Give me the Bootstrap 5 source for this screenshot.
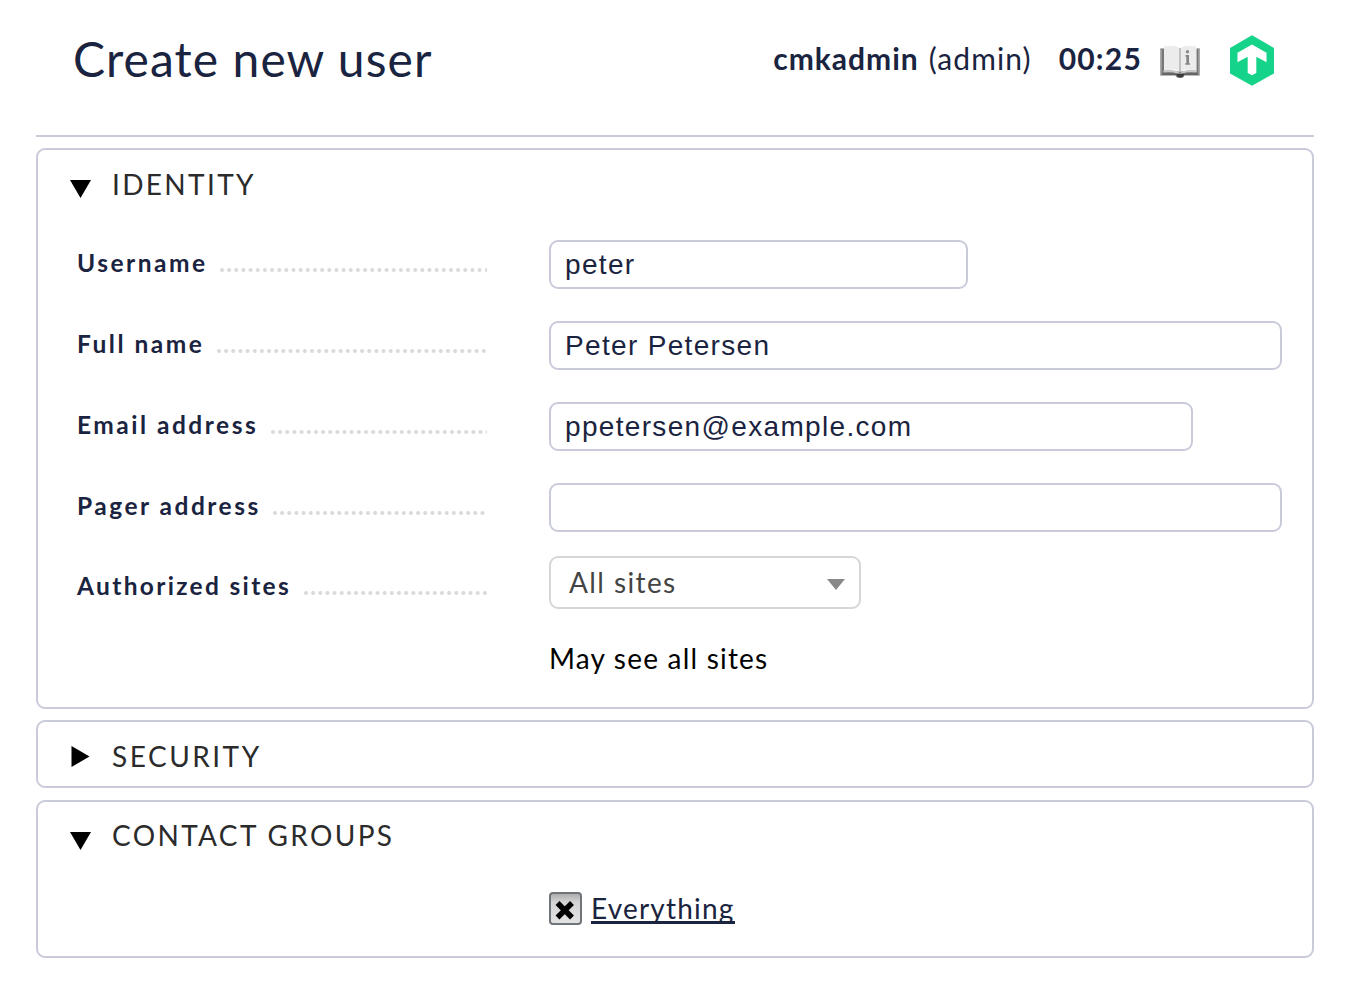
<!DOCTYPE html>
<html lang="en">
<head>
<meta charset="utf-8">
<title>Create new user</title>
<link rel="stylesheet" href="https://cdn.jsdelivr.net/npm/bootstrap@5.3.0/dist/css/bootstrap.min.css">
<style>
body{font-family:Lato,sans-serif;color:#1a2440;background:#fff;font-size:28px;letter-spacing:1.4px;line-height:34px}
.page{padding:0 36px}
.topbar{height:137px;border-bottom:2px solid #c9cbdb;padding:30px 40px 0 37px}
.topbar h1{font-size:48px;line-height:58px;font-weight:400;letter-spacing:1.08px;color:#1a2440}
.userinfo{font-size:30px;line-height:36px;letter-spacing:1px;padding-top:10px}
.userinfo .role{letter-spacing:1.1px;margin-left:10px}
.clock{margin-left:27px;letter-spacing:1.2px}
.book{margin-left:18px;margin-top:15px}
.logo{margin-left:30px;margin-top:5px}
.panel{border:2px solid #c9cbdb;border-radius:9px}
.panel h2{font-size:28px;line-height:34px;letter-spacing:2.35px;color:#2b2b2b;font-weight:400}
.security h2{letter-spacing:2.5px}
.identity{height:561px;margin-top:11px}
.security{height:68px;margin-top:11px}
.groups{height:158px;margin-top:12px}
.head{padding:17px 0 0 32px}
.head svg{width:22px;height:22px;margin-right:20px;margin-top:9px}
.security .head svg{margin-top:7px}
.groups .head{padding-top:16px}
.groups .head svg{margin-top:10px}
.fields{padding-top:39px}
.field{height:81px;padding-left:39px}
.field.pager{height:73px}
.legend-cell{width:410px;margin-right:62px;font-weight:700;font-size:24.5px;letter-spacing:2.5px;height:49px;line-height:46px;white-space:nowrap}
.sites .legend-cell{margin-top:7px;letter-spacing:2.33px}
.dots{height:4px;margin-top:28px;margin-left:12.5px;background:radial-gradient(circle at 2px 2px,#dadada 1.6px,transparent 2.3px) 0 0/7.17px 4px repeat-x}
.field .form-control{height:49px;border:2px solid #c9cbdb;border-radius:9px;padding:1px 14px 0;font:28px "Liberation Sans",sans-serif;letter-spacing:1.33px;color:#1a2440}
.w-name{width:419px}.w-full{width:733px}.w-mail{width:644px}
.picker{width:312px;height:53px;border:2px solid #d6d6d6;border-radius:9px;color:#444;padding:0 14px 2px 18px}
.picker svg{margin-top:5px}
.note{color:#000;letter-spacing:1.2px;padding:4px 0 0 511px}
.tick{width:33px;height:33px;margin-right:9px}
.group-row{padding:40px 0 0 511px}
.group-row a{color:#1a2440;text-decoration:none;border-bottom:3px solid #1a2440;height:32px;line-height:32px;letter-spacing:1.2px}
</style>
</head>
<body>
<div class="page">
  <header class="topbar d-flex align-items-start">
    <h1 class="m-0 me-auto">Create new user</h1>
    <div class="userinfo d-flex"><b>cmkadmin</b><span class="role">(admin)</span><b class="clock">00:25</b></div>
    <svg class="book" width="40" height="33" viewBox="-.5 0 40 33">
      <path d="M0 3.500h4v23h32v-23h3v27H24q-1 2.500-4.500 2.500T15 30.500H0z" fill="#777"/>
      <path d="M0 3.500h1.500v27H0zM37.500 3.500H39v27h-1.500z" fill="#999"/>
      <path d="M2 27.500h35.500v2.500H2z" fill="#666"/>
      <path d="M16 28.500h7.500v1.500q-1 2.500-3.700 2.500T16 30z" fill="#3c3c3c"/>
      <path d="M3 25q9-2 16.500 3Q27 23 36 25v2.500q-10-1-13.500 1h-6Q12 26.500 3 27.500z" fill="#c8c8c8"/>
      <path d="M3.500 1.500Q13-.5 19.500 3v23.500Q12 23 3.500 25zM19.500 3Q26-.5 35.500 1.500V25Q27 23 19.500 26.500z" fill="#ececec"/>
      <path d="M19.500 3v24" stroke="#b5b5b5" stroke-width="1.500"/>
      <circle cx="27" cy="6.700" r="1.700" fill="#8c8c8c"/>
      <path d="M25 10h3.500v8.300h1v1.400h-4.700v-1.400h1v-6.800H25z" fill="#858585"/>
    </svg>
    <svg class="logo" width="44" height="52" viewBox="0 0 44 52">
      <path d="M22 .3 44 13v25.500L22 50.700 0 38.500V13z" fill="#15d48a"/>
      <path d="M22 9.500 36.500 17.800V27.300L26.300 21.800V38l-4.300 2.300-4.300-2.300V21.800L7.500 27.300V17.800z" fill="#fff"/>
    </svg>
  </header>

  <section class="panel identity">
    <div class="head d-flex align-items-start"><svg viewBox="0 0 22 22"><path d="M0 4h21L10.500 22z"/></svg><h2 class="m-0">IDENTITY</h2></div>
    <div class="fields">
      <div class="field d-flex"><div class="legend-cell d-flex"><span>Username</span><i class="dots flex-grow-1"></i></div><input class="form-control w-name" value="peter"></div>
      <div class="field d-flex"><div class="legend-cell d-flex"><span>Full name</span><i class="dots flex-grow-1"></i></div><input class="form-control w-full" value="Peter Petersen"></div>
      <div class="field d-flex"><div class="legend-cell d-flex"><span>Email address</span><i class="dots flex-grow-1"></i></div><input class="form-control w-mail" value="ppetersen@example.com"></div>
      <div class="field pager d-flex"><div class="legend-cell d-flex"><span>Pager address</span><i class="dots flex-grow-1"></i></div><input class="form-control w-full" value=""></div>
      <div class="field sites d-flex"><div class="legend-cell d-flex"><span>Authorized sites</span><i class="dots flex-grow-1"></i></div>
        <div class="picker d-flex justify-content-between align-items-center"><span>All sites</span><svg width="18" height="11" viewBox="0 0 18 11"><path d="M0 0h18L9 11z" fill="#888"/></svg></div></div>
      <div class="note">May see all sites</div>
    </div>
  </section>

  <section class="panel security">
    <div class="head d-flex align-items-start"><svg viewBox="0 0 22 22"><path d="M1.500 0v21L19.500 10.500z"/></svg><h2 class="m-0">SECURITY</h2></div>
  </section>

  <section class="panel groups">
    <div class="head d-flex align-items-start"><svg viewBox="0 0 22 22"><path d="M0 4h21L10.500 22z"/></svg><h2 class="m-0">CONTACT GROUPS</h2></div>
    <div class="group-row d-flex">
      <svg class="tick" viewBox="0 0 33 33"><defs><linearGradient id="g" x1="0" y1="0" x2="0" y2="1"><stop offset="0" stop-color="#a8a8a8"/><stop offset=".3" stop-color="#d4d4d4"/><stop offset="1" stop-color="#e4e4e4"/></linearGradient></defs>
        <rect x="1" y="1" width="31" height="31" rx="3" fill="url(#g)" stroke="#70757a" stroke-width="2"/>
        <path d="M8.500 11l14.500 14.500M23 11L8.500 25.500" stroke="#000" stroke-width="5.500"/></svg>
      <a href="#">Everything</a>
    </div>
  </section>
</div>
<script src="https://cdn.jsdelivr.net/npm/bootstrap@5.3.0/dist/js/bootstrap.bundle.min.js"></script>
</body>
</html>
